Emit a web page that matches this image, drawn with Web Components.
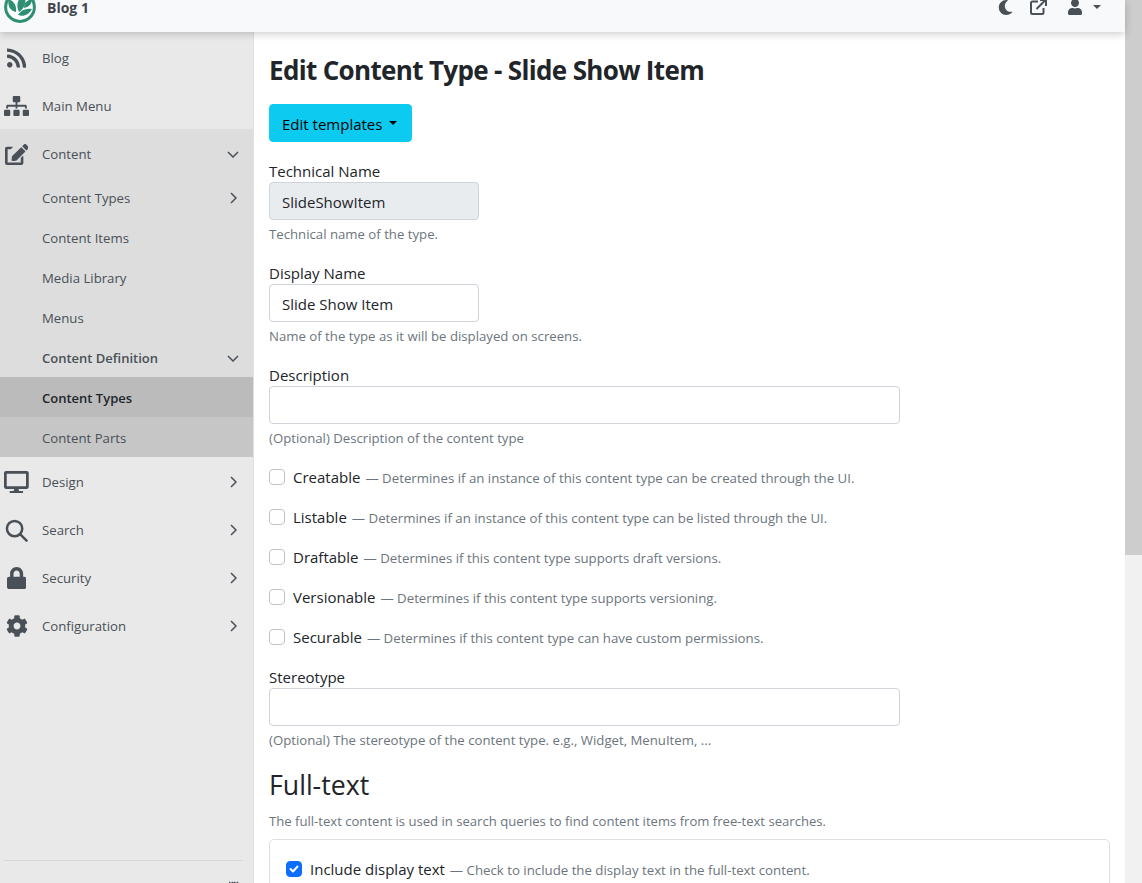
<!DOCTYPE html>
<html>
<head>
<meta charset="utf-8">
<title>Edit Content Type</title>
<style>
  html, body { margin: 0; height: 100%; overflow: hidden; }
  body {
    font-family: "Open Sans", "Liberation Sans", sans-serif;
    font-size: 15px;
    color: #212529;
    background: #fff;
  }
</style>
</head>
<body>
<admin-shell>
  <top-bar slot="top" site="Blog 1"></top-bar>
  <side-nav slot="side">
    <nav-item icon="rss" label="Blog"></nav-item>
    <nav-item icon="sitemap" label="Main Menu"></nav-item>
    <nav-item icon="edit" label="Content" caret="down" open>
      <nav-item sub label="Content Types" caret="right"></nav-item>
      <nav-item sub label="Content Items"></nav-item>
      <nav-item sub label="Media Library"></nav-item>
      <nav-item sub label="Menus"></nav-item>
      <nav-item sub strong label="Content Definition" caret="down" open>
        <nav-item sub strong active label="Content Types"></nav-item>
        <nav-item sub deep label="Content Parts"></nav-item>
      </nav-item>
    </nav-item>
    <nav-item icon="desktop" label="Design" caret="right"></nav-item>
    <nav-item icon="search" label="Search" caret="right"></nav-item>
    <nav-item icon="lock" label="Security" caret="right"></nav-item>
    <nav-item icon="cog" label="Configuration" caret="right"></nav-item>
  </side-nav>

  <page-title>Edit Content Type - Slide Show Item</page-title>
  <drop-button>Edit templates</drop-button>

  <form-field label="Technical Name" value="SlideShowItem" size="small" disabled help="Technical name of the type."></form-field>
  <form-field label="Display Name" value="Slide Show Item" size="small" help="Name of the type as it will be displayed on screens."></form-field>
  <form-field label="Description" help="(Optional) Description of the content type"></form-field>

  <check-field label="Creatable" help="Determines if an instance of this content type can be created through the UI."></check-field>
  <check-field label="Listable" help="Determines if an instance of this content type can be listed through the UI."></check-field>
  <check-field label="Draftable" help="Determines if this content type supports draft versions."></check-field>
  <check-field label="Versionable" help="Determines if this content type supports versioning."></check-field>
  <check-field label="Securable" help="Determines if this content type can have custom permissions."></check-field>

  <form-field label="Stereotype" help="(Optional) The stereotype of the content type. e.g., Widget, MenuItem, ..."></form-field>

  <section-head title="Full-text" help="The full-text content is used in search queries to find content items from free-text searches."></section-head>
  <plain-card>
    <check-field checked label="Include display text" help="Check to include the display text in the full-text content."></check-field>
  </plain-card>
</admin-shell>

<script>
const ICONS = {
  rss: ['0 0 448 512', 'M128.081 415.959c0 35.369-28.672 64.041-64.041 64.041S0 451.328 0 415.959s28.672-64.041 64.041-64.041 64.04 28.673 64.04 64.041zm175.66 47.25c-8.354-154.6-132.185-278.587-286.95-286.95C7.656 175.765 0 183.105 0 192.253v48.069c0 8.415 6.49 15.472 14.887 16.018 111.832 7.284 201.473 96.702 208.772 208.772.547 8.397 7.604 14.887 16.018 14.887h48.069c9.149.001 16.489-7.655 15.995-16.79zm144.249.288C439.596 229.677 251.465 40.445 16.503 32.01 7.473 31.686 0 38.981 0 48.016v48.068c0 8.625 6.835 15.645 15.453 15.999 191.179 7.839 344.627 161.316 352.465 352.465.353 8.618 7.373 15.453 15.999 15.453h48.068c9.034-.001 16.329-7.474 16.005-16.504z'],
  sitemap: ['0 0 640 512', 'M128 352H32c-17.67 0-32 14.33-32 32v96c0 17.67 14.33 32 32 32h96c17.67 0 32-14.33 32-32v-96c0-17.67-14.33-32-32-32zm-24-80h192v48h48v-48h192v48h48v-57.59c0-21.17-17.23-38.41-38.41-38.41H344v-64h40c17.67 0 32-14.33 32-32V32c0-17.67-14.33-32-32-32H256c-17.67 0-32 14.33-32 32v96c0 17.67 14.33 32 32 32h40v64H94.41C73.23 224 56 241.23 56 262.41V320h48v-48zm264 80h-96c-17.67 0-32 14.33-32 32v96c0 17.67 14.33 32 32 32h96c17.67 0 32-14.33 32-32v-96c0-17.67-14.33-32-32-32zm240 0h-96c-17.67 0-32 14.33-32 32v96c0 17.67 14.33 32 32 32h96c17.67 0 32-14.33 32-32v-96c0-17.67-14.33-32-32-32z'],
  edit: ['0 0 576 512', 'M402.6 83.2l90.2 90.2c3.8 3.8 3.8 10 0 13.8L274.4 405.6l-92.8 10.3c-12.4 1.4-22.9-9.1-21.5-21.5l10.3-92.8L388.8 83.2c3.8-3.8 10-3.8 13.8 0zm162-22.9l-48.8-48.8c-15.2-15.2-39.9-15.2-55.2 0l-35.4 35.4c-3.8 3.8-3.8 10 0 13.8l90.2 90.2c3.8 3.8 10 3.8 13.8 0l35.4-35.4c15.2-15.3 15.2-40 0-55.2zM384 346.2V448H64V128h73.1c3.2 0 6.2-1.3 8.5-3.5l40-40c7.6-7.6 2.2-20.5-8.5-20.5H48C21.5 64 0 85.5 0 112v352c0 26.5 21.5 48 48 48h352c26.5 0 48-21.5 48-48V306.2c0-10.7-12.9-16-20.5-8.5l-40 40c-2.2 2.3-3.5 5.3-3.5 8.5z'],
  desktop: ['0 0 576 512', 'M528 0H48C21.5 0 0 21.5 0 48v320c0 26.5 21.5 48 48 48h192l-16 48h-72c-13.3 0-24 10.7-24 24s10.7 24 24 24h272c13.3 0 24-10.7 24-24s-10.7-24-24-24h-72l-16-48h192c26.5 0 48-21.5 48-48V48c0-26.5-21.5-48-48-48zm-16 352H64V64h448v288z'],
  lock: ['0 0 448 512', 'M400 224h-24v-72C376 68.2 307.8 0 224 0S72 68.2 72 152v72H48c-26.5 0-48 21.5-48 48v192c0 26.5 21.5 48 48 48h352c26.5 0 48-21.5 48-48V272c0-26.5-21.5-48-48-48zm-104 0H152v-72c0-39.7 32.3-72 72-72s72 32.3 72 72v72z'],
  cog: ['0 0 512 512', 'M487.4 315.7l-42.6-24.6c4.3-23.2 4.3-47 0-70.2l42.6-24.6c4.9-2.8 7.1-8.6 5.5-14-11.1-35.6-30-67.8-54.7-94.6-3.8-4.1-10-5.1-14.8-2.3L380.8 110c-17.9-15.4-38.5-27.3-60.8-35.1V25.8c0-5.6-3.9-10.5-9.4-11.7-36.7-8.2-74.3-7.8-109.2 0-5.5 1.2-9.4 6.1-9.4 11.7V75c-22.2 7.9-42.8 19.8-60.8 35.1L88.7 85.5c-4.9-2.8-11-1.9-14.8 2.3-24.7 26.7-43.6 58.9-54.7 94.6-1.7 5.4.6 11.2 5.5 14L67.3 221c-4.3 23.2-4.3 47 0 70.2l-42.6 24.6c-4.9 2.8-7.1 8.6-5.5 14 11.1 35.6 30 67.8 54.7 94.6 3.8 4.1 10 5.1 14.8 2.3l42.6-24.6c17.9 15.4 38.5 27.3 60.8 35.1v49.2c0 5.6 3.9 10.5 9.4 11.7 36.7 8.2 74.3 7.8 109.2 0 5.5-1.2 9.4-6.1 9.4-11.7v-49.2c22.2-7.9 42.8-19.8 60.8-35.1l42.6 24.6c4.9 2.8 11 1.9 14.8-2.3 24.7-26.7 43.6-58.9 54.7-94.6 1.5-5.5-.7-11.3-5.6-14.1zM256 336c-44.1 0-80-35.9-80-80s35.9-80 80-80 80 35.9 80 80-35.9 80-80 80z'],
  moon: ['0 0 512 512', 'M283.211 512c78.962 0 151.079-35.925 198.857-94.792 7.068-8.708-.639-21.43-11.562-19.35-124.203 23.654-238.262-71.576-238.262-196.954 0-72.222 38.662-138.635 101.498-174.394 9.686-5.512 7.25-20.197-3.756-22.23A258.156 258.156 0 0 0 283.211 0c-141.309 0-256 114.511-256 256 0 141.309 114.511 256 256 256z'],
  user: ['0 0 448 512', 'M224 256c70.7 0 128-57.3 128-128S294.7 0 224 0 96 57.3 96 128s57.3 128 128 128zm89.6 32h-16.7c-22.2 10.2-46.9 16-72.9 16s-50.6-5.8-72.9-16h-16.7C60.2 288 0 348.2 0 422.4V464c0 26.5 21.5 48 48 48h352c26.5 0 48-21.5 48-48v-41.6c0-74.2-60.2-134.4-134.4-134.4z']
};

function iconSvg(name, size) {
  // search is thinner in the reference than the solid glyph, so it gets strokes
  if (name === 'search') {
    return `<svg viewBox="0 0 24 24" height="${size}" fill="none" stroke="currentColor" stroke-width="2.600" stroke-linecap="round" aria-hidden="true"><circle cx="10" cy="10" r="8"/><path d="M16 16l6.500 6.500"/></svg>`;
  }
  const [box, d] = ICONS[name];
  return `<svg viewBox="${box}" height="${size}" fill="currentColor" aria-hidden="true"><path d="${d}"/></svg>`;
}

function define(tag, html, setup) {
  customElements.define(tag, class extends HTMLElement {
    constructor() {
      super();
      this.attachShadow({ mode: 'open' });
    }
    connectedCallback() {
      this.shadowRoot.innerHTML = typeof html === 'function' ? html(this) : html;
      if (setup) setup(this);
    }
  });
}

define('admin-shell', `
  <style>
    :host { display: flex; height: 883px; overflow: hidden; }
    .page { flex: 1; min-width: 0; display: flex; flex-direction: column; }
    .top { position: relative; z-index: 2; flex: none; }
    .body { flex: 1; min-height: 0; display: flex; }
    main { flex: 1; min-width: 0; padding: 17px 15px 0 15px; overflow: hidden; }
    .scrollbar { flex: none; width: 17px; background: #f1f1f1; }
    .thumb { height: 555px; background: #cdcdcd; }
  </style>
  <div class="page">
    <div class="top"><slot name="top"></slot></div>
    <div class="body">
      <slot name="side"></slot>
      <main><slot></slot></main>
    </div>
  </div>
  <div class="scrollbar"><div class="thumb"></div></div>
`);

define('top-bar', el => `
  <style>
    :host { display: block; height: 32px; overflow: hidden; background: #f8f9fa; box-shadow: 0 2px 8px rgba(0,0,0,.2); color: #495057; }
    .inner { height: 46px; margin-top: -16px; display: flex; align-items: center; padding: 0 24px 0 4px; }
    .logo { width: 32px; height: 32px; flex: none; }
    .site { margin-left: 11px; padding-top: 2px; font-size: 14px; line-height: 14px; font-weight: 700; color: #3f454b; flex: 1; }
    .tools { display: flex; align-items: center; color: #495057; }
    .moon { margin-right: 17px; display: flex; }
    .ext { margin-right: 21px; display: flex; }
    .user { margin-right: 11px; display: flex; }
    .caret { width: 0; height: 0; border: 4px solid transparent; border-top-color: currentColor; border-bottom: 0; }
  </style>
  <div class="inner">
    <svg class="logo" viewBox="0 0 32 32" aria-hidden="true">
      <circle cx="16" cy="16" r="14.400" fill="#fff" stroke="#2f8f72" stroke-width="3"/>
      <path d="M12 21C6 20 3.500 15 4.500 8C10 10 13 15 12 21Z" fill="#2f8f72"/>
      <path d="M15 21C12 15 13 8 20 3C23 10 21 17 15 21Z" fill="#2f8f72"/>
      <path d="M20 17C20 12 23 9 28 8C28 13 25 16 20 17Z" fill="#2f8f72"/>
      <path d="M14 24C17 19 22 17 28 18C25 24 19 26 14 24Z" fill="#2f8f72"/>
    </svg>
    <span class="site">${el.getAttribute('site')}</span>
    <div class="tools">
      <span class="moon">${iconSvg('moon', 15)}</span>
      <span class="ext">
        <svg width="17" height="16" viewBox="0 0 17 16" fill="none" stroke="currentColor" stroke-width="2" aria-hidden="true">
          <path d="M8 2.500H2.500a1.500 1.500 0 0 0-1.500 1.500V13.500a1.500 1.500 0 0 0 1.500 1.500H12a1.500 1.500 0 0 0 1.500-1.500V9"/>
          <path d="M6.500 10L15 1.500M10 1h6v6" />
        </svg>
      </span>
      <span class="user">${iconSvg('user', 16)}</span>
      <span class="caret"></span>
    </div>
  </div>
`);

define('side-nav', `
  <style>
    :host { display: flex; flex-direction: column; flex: none; width: 253px; height: 851px; box-sizing: content-box; background: #e9e9e9; border-right: 1px solid #e0e0e0; overflow: hidden; }
    .list { padding-top: 1px; flex: 1; }
    .foot { flex: none; height: 22px; margin: 0 10px 0 4px; border-top: 1px solid #d9d9d9; display: flex; justify-content: flex-end; align-items: flex-end; color: #495057; overflow: hidden; }
    .foot svg { margin: 0 4px -8px 0; flex: none; }
  </style>
  <div class="list"><slot></slot></div>
  <div class="foot">
    <svg width="10" height="10" viewBox="0 0 10 10" fill="none" stroke="currentColor" stroke-width="1.500" aria-hidden="true"><path d="M0 1l2 2 2-2M5 1l2 2 2-2"/></svg>
  </div>
`);

define('nav-item', el => {
  const icon = el.getAttribute('icon');
  const caret = el.getAttribute('caret');
  const sizes = { sitemap: 20, search: 23, edit: 21 };
  const paths = { down: 'M1 1l5 5 5-5', right: 'M1 1l5 5-5 5' };
  const open = el.hasAttribute('open');
  const sub = el.hasAttribute('sub');
  const strong = el.hasAttribute('strong');
  const bg = el.hasAttribute('active') ? '#bbb' : el.hasAttribute('deep') ? '#c6c6c6' : (open || sub) ? '#ddd' : 'transparent';
  const fg = el.hasAttribute('active') ? '#212529' : '#495057';
  return `
    <style>
      :host { display: block; }
      .row { display: flex; align-items: center; box-sizing: border-box; padding-top: 2px; height: ${sub ? 40 : 48}px; background: ${bg}; color: ${fg}; font-size: ${strong ? 13 : 13.2}px; font-weight: ${strong ? 600 : 400}; }
      .icon { width: 33px; flex: none; display: flex; justify-content: center; color: #495057; }
      .label { flex: 1; margin-left: ${icon ? 9 : 42}px; white-space: nowrap; }
      .caret { flex: none; margin-right: 14px; display: flex; justify-content: center; width: 12px; color: #495057; }
    </style>
    <div class="row" part="row">
      ${icon ? `<span class="icon">${iconSvg(icon, sizes[icon] || 22)}</span>` : ''}
      <span class="label">${el.getAttribute('label')}</span>
      ${caret ? `<span class="caret"><svg width="${caret === 'down' ? 12 : 7}" height="${caret === 'down' ? 7 : 12}" viewBox="0 0 ${caret === 'down' ? '12 7' : '7 12'}" fill="none" stroke="currentColor" stroke-width="1.500" aria-hidden="true"><path d="${paths[caret]}"/></svg></span>` : ''}
    </div>
    ${open ? '<slot></slot>' : ''}
  `;
});

define('page-title', `
  <style>
    :host { display: block; margin-bottom: 13px; font-size: 26px; letter-spacing: -0.660px; line-height: 42px; font-weight: 700; color: #212529; white-space: nowrap; }
  </style>
  <slot></slot>
`);

define('drop-button', `
  <style>
    :host { display: block; margin-bottom: 17px; }
    button { display: flex; align-items: center; height: 38px; width: 143px; padding: 2px 12px 0; box-sizing: border-box; border: 1px solid #0dcaf0; border-radius: 4px; background: #0dcaf0; color: #000; font: inherit; white-space: nowrap; }
    i { margin-left: 7px; margin-top: -2px; width: 0; height: 0; border: 4.800px solid transparent; border-top-color: #000; border-bottom: 0; }
  </style>
  <button type="button"><slot></slot><i></i></button>
`);

define('form-field', el => `
  <style>
    :host { display: block; margin-bottom: 16px; }
    label { display: block; height: 23px; line-height: 25px; }
    .input { height: 38px; box-sizing: border-box; width: ${el.getAttribute('size') === 'small' ? 210 : 631}px; padding: 0 12px; line-height: 38px; border: 1px solid #ced4da; border-radius: 4px; background: ${el.hasAttribute('disabled') ? '#e9ecef' : '#fff'}; color: #212529; white-space: nowrap; overflow: hidden; }
    .help { margin-top: 4px; font-size: 13.200px; line-height: 20px; height: 21px; color: #6c757d; }
  </style>
  <label>${el.getAttribute('label')}</label>
  <div class="input">${el.getAttribute('value') || ''}</div>
  <div class="help">${el.getAttribute('help')}</div>
`);

define('check-field', el => `
  <style>
    :host { display: flex; align-items: center; height: 24px; margin-bottom: 16px; white-space: nowrap; }
    .box { flex: none; width: 16px; height: 16px; box-sizing: border-box; margin-right: 8px; border-radius: 4px; border: 1px solid ${el.hasAttribute('checked') ? '#0d6efd' : '#bfc4c9'}; background: ${el.hasAttribute('checked') ? '#0d6efd' : '#fff'}; display: flex; align-items: center; justify-content: center; }
    .help { margin-left: 5px; padding-top: 2px; font-size: 13.250px; color: #6c757d; }
  </style>
  <span class="box">${el.hasAttribute('checked') ? '<svg width="10" height="8" viewBox="0 0 10 8" fill="none" stroke="#fff" stroke-width="2" stroke-linecap="round" stroke-linejoin="round" aria-hidden="true"><path d="M1.500 4l2.500 2.500 4.500-5"/></svg>' : ''}</span>
  <span>${el.getAttribute('label')}</span>
  <span class="help">— ${el.getAttribute('help')}</span>
`);

define('section-head', el => `
  <style>
    :host { display: block; margin-bottom: 7px; }
    h2 { margin: 0 0 8px; font-size: 26.700px; line-height: 35px; padding-bottom: 1px; font-weight: 400; color: #212529; }
    p { margin: 0; font-size: 13.100px; line-height: 21px; color: #6c757d; }
  </style>
  <h2>${el.getAttribute('title')}</h2>
  <p>${el.getAttribute('help')}</p>
`);

define('plain-card', `
  <style>
    :host { display: block; box-sizing: border-box; width: 841px; padding: 17px 16px 16px; border: 1px solid #dfdfdf; border-radius: 5px; }
  </style>
  <slot></slot>
`);
</script>
</body>
</html>
